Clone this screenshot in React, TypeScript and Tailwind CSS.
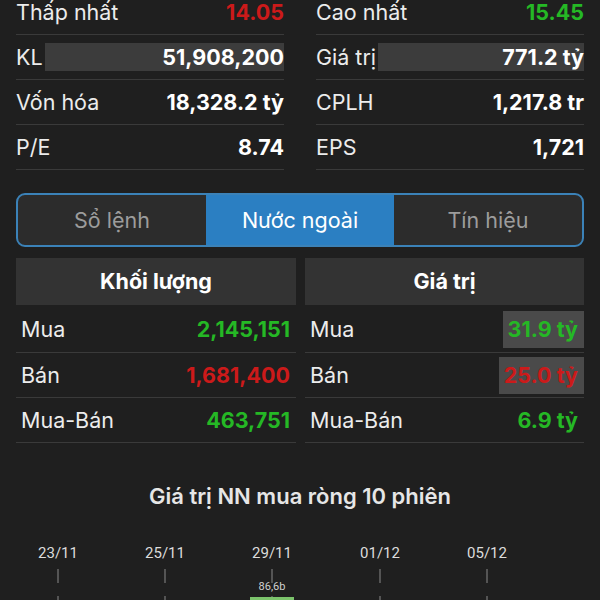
import React from 'react';

type StatRow = { label: string; value: string; tone?: 'red' | 'green'; boxed?: boolean };

const LEFT_STATS: StatRow[] = [
  { label: 'Thấp nhất', value: '14.05', tone: 'red' },
  { label: 'KL', value: '51,908,200', boxed: true },
  { label: 'Vốn hóa', value: '18,328.2 tỷ' },
  { label: 'P/E', value: '8.74' },
];

const RIGHT_STATS: StatRow[] = [
  { label: 'Cao nhất', value: '15.45', tone: 'green' },
  { label: 'Giá trị', value: '771.2 tỷ', boxed: true },
  { label: 'CPLH', value: '1,217.8 tr' },
  { label: 'EPS', value: '1,721' },
];

const toneClass = (tone?: 'red' | 'green') =>
  tone === 'red' ? 'text-[#cc1a1a] font-bold' : tone === 'green' ? 'text-[#25b825] font-bold' : 'text-white font-bold';

const StatColumn: React.FC<{ rows: StatRow[] }> = ({ rows }) => (
  <div className="flex flex-col">
    {rows.map((r) => (
      <div key={r.label} className="h-[45px] flex items-center border-b border-[#3a3a3a] shrink-0">
        <span className="text-[#ececec] whitespace-nowrap">{r.label}</span>
        {r.boxed ? (
          <div className="flex-1 ml-[2px] h-[28px] bg-[#3c3c3c] flex items-center justify-end">
            <span className={toneClass(r.tone)}>{r.value}</span>
          </div>
        ) : (
          <span className={`ml-auto ${toneClass(r.tone)}`}>{r.value}</span>
        )}
      </div>
    ))}
  </div>
);

type TableRow = { label: string; value: string; tone: 'red' | 'green'; boxed?: boolean };

const ForeignTable: React.FC<{ title: string; rows: TableRow[] }> = ({ title, rows }) => (
  <div className="flex flex-col">
    <div className="h-[47px] bg-[#333333] flex items-center justify-center font-bold text-white">{title}</div>
    {rows.map((r, i) => (
      <div
        key={r.label}
        className={`${i === 0 ? 'h-[48px] pt-[2px]' : 'h-[45px]'} flex items-center border-b border-[#3a3a3a] pl-[5px]`}
      >
        <span className="text-[#ececec]">{r.label}</span>
        {r.boxed ? (
          <div className="ml-auto h-[37px] bg-[#4a4a4a] flex items-center pl-[5px] pr-[6px]">
            <span className={toneClass(r.tone)}>{r.value}</span>
          </div>
        ) : (
          <span className={`ml-auto pr-[6px] ${toneClass(r.tone)}`}>{r.value}</span>
        )}
      </div>
    ))}
  </div>
);

const DATES = [
  { x: 58, t: '23/11' },
  { x: 165, t: '25/11' },
  { x: 272, t: '29/11' },
  { x: 380, t: '01/12' },
  { x: 487, t: '05/12' },
];

const Chart = () => (
  <svg width="600" height="80" viewBox="0 0 600 80" className="block">
    {DATES.map((d) => (
      <g key={d.t}>
        <text x={d.x} y={32} textAnchor="middle" fontSize="15" fill="#dcdcdc" fontFamily="Roboto, sans-serif">
          {d.t}
        </text>
        <line x1={d.x} y1={43} x2={d.x} y2={57} stroke="#8a8a8a" strokeWidth="1" />
        <line x1={d.x} y1={70} x2={d.x} y2={80} stroke="#8a8a8a" strokeWidth="1" />
      </g>
    ))}
    <text x={272} y={64} textAnchor="middle" fontSize="11" fill="#cfcfcf" fontFamily="Roboto, sans-serif">
      86,6b
    </text>
    <rect x={250} y={71} width={44} height={9} fill="#7cc46c" />
  </svg>
);

export default function App() {
  return (
    <div className="w-[600px] h-[600px] overflow-hidden bg-[#1f1f1f] font-['Inter',sans-serif] text-[21.5px]">
      <div className="px-4 -mt-[10px] grid grid-cols-2 gap-8">
        <StatColumn rows={LEFT_STATS} />
        <StatColumn rows={RIGHT_STATS} />
      </div>

      <div className="mx-4 mt-[23px] h-[54px] rounded-[9px] border-2 border-[#3b82b8] bg-[#2c2c2c] grid grid-cols-3 overflow-hidden">
        <div className="flex items-center justify-center text-[#9c9c9c]">Sổ lệnh</div>
        <div className="flex items-center justify-center bg-[#2b7fc2] text-white">Nước ngoài</div>
        <div className="flex items-center justify-center text-[#9c9c9c]">Tín hiệu</div>
      </div>

      <div className="mx-4 mt-[11px] grid grid-cols-[280px_1fr] gap-[9px]">
        <ForeignTable
          title="Khối lượng"
          rows={[
            { label: 'Mua', value: '2,145,151', tone: 'green' },
            { label: 'Bán', value: '1,681,400', tone: 'red' },
            { label: 'Mua-Bán', value: '463,751', tone: 'green' },
          ]}
        />
        <ForeignTable
          title="Giá trị"
          rows={[
            { label: 'Mua', value: '31.9 tỷ', tone: 'green', boxed: true },
            { label: 'Bán', value: '25.0 tỷ', tone: 'red', boxed: true },
            { label: 'Mua-Bán', value: '6.9 tỷ', tone: 'green' },
          ]}
        />
      </div>

      <div className="mt-[37px] text-center text-[22px] font-semibold text-[#e6e6e6]">Giá trị NN mua ròng 10 phiên</div>
      <div className="mt-[13px]">
        <Chart />
      </div>
    </div>
  );
}
